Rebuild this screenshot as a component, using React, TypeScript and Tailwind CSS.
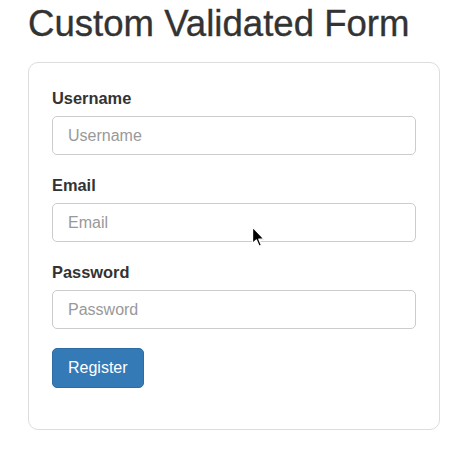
import React from "react";

const Field = ({ label, type }: { label: string; type: string }) => {
  return (
    <div className="mb-[19px]">
      <label className="block text-[16.4px] leading-[23px] font-bold text-[#333] mb-[6px]">
        {label}
      </label>
      <input
        type={type}
        placeholder={label}
        className="block w-full h-[39px] px-[15px] text-[16px] text-[#555] placeholder:text-[#999] bg-white border border-[#ccc] rounded-[5px] outline-none"
      />
    </div>
  );
};

const Cursor = () => (
  <svg
    className="absolute left-[250px] top-[226px]"
    width="16"
    height="23"
    viewBox="0 0 14 21"
  >
    <path
      d="M2 1 L2 16 L5.5 12.8 L8 18.5 L10.2 17.5 L7.8 12 L12.5 12 Z"
      fill="#000"
      stroke="#fff"
      strokeWidth="1.2"
      strokeLinejoin="round"
    />
  </svg>
);

export default function App() {
  return (
    <div
      className="relative w-[474px] h-[451px] bg-white"
      style={{ fontFamily: '"Liberation Sans", Arial, sans-serif' }}
    >
      <div className="ml-[28px] w-[412px] pt-1">
        <h1 className="text-[36.6px] leading-[40px] font-normal text-[#333] [-webkit-text-stroke:0.35px_#333]">
          Custom Validated Form
        </h1>
        <form className="mt-[18px] border border-[#ddd] rounded-[10px] px-[23px] pt-[24px] pb-[41px]">
          <Field label="Username" type="text" />
          <Field label="Email" type="email" />
          <Field label="Password" type="password" />
          <button
            type="button"
            className="h-[40px] px-[15px] text-[16px] text-white bg-[#337ab7] border border-[#2e6da4] rounded-[5px]"
          >
            Register
          </button>
        </form>
      </div>
      <Cursor />
    </div>
  );
}
